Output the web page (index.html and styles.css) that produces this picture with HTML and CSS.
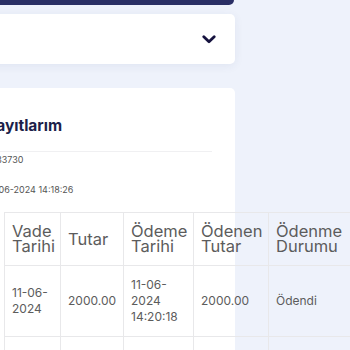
FILE: index.html
```html
<!DOCTYPE html>
<html lang="tr">
<head>
<meta charset="utf-8">
<link rel="stylesheet" href="styles.css">
</head>
<body>
<div class="page">
  <div class="topbar"></div>
  <div class="select-card">
    <svg class="chevron" width="14" height="9" viewBox="0 0 14 9"><path d="M1.8 1.8 L7 6.8 L12.2 1.8" fill="none" stroke="#16133f" stroke-width="2.8" stroke-linecap="round" stroke-linejoin="round"/></svg>
  </div>
  <div class="records-card">
    <h2 class="title">Kayıtlarım</h2>
    <div class="info">
      <div class="info-row">1233730</div>
      <div class="info-row">11-06-2024 14:18:26</div>
    </div>
    <table class="plan">
      <colgroup>
        <col class="c1"><col class="c2"><col class="c3"><col class="c4"><col class="c5">
      </colgroup>
      <thead>
        <tr>
          <th>Vade Tarihi</th>
          <th>Tutar</th>
          <th>Ödeme Tarihi</th>
          <th>Ödenen Tutar</th>
          <th>Ödenme Durumu</th>
        </tr>
      </thead>
      <tbody>
        <tr class="row">
          <td>11-06-<br>2024</td>
          <td>2000.00</td>
          <td>11-06-<br>2024<br>14:20:18</td>
          <td>2000.00</td>
          <td>Ödendi</td>
        </tr>
        <tr class="row">
          <td>11-07-<br>2024</td>
          <td>2000.00</td>
          <td></td>
          <td>0.00</td>
          <td>Bekliyor</td>
        </tr>
      </tbody>
    </table>
  </div>
</div>
</body>
</html>
```

FILE: styles.css
```css
html, body {
  margin: 0;
  padding: 0;
}
body {
  background: #eef2fb;
  font-family: Inter, "Open Sans", sans-serif;
  overflow: hidden;
  height: 350px;
}
.page {
  margin-left: -24px;
  width: 259px;
  display: flex;
  flex-direction: column;
}
.topbar {
  height: 5px;
  background: #2a2f65;
  border-radius: 0 0 5px 5px;
  width: 258px;
}
.select-card {
  margin-top: 9px;
  height: 50px;
  background: #fff;
  border-radius: 5px;
  box-shadow: 0 2px 10px rgba(40, 50, 110, 0.07);
  display: flex;
  align-items: center;
  justify-content: flex-end;
  padding-right: 19px;
}
.chevron {
  display: block;
  margin-top: 1px;
}
.records-card {
  margin-top: 24px;
  background: #fff;
  border-radius: 5px;
  padding: 28px 23px 0 11px;
  height: 400px;
}
.title {
  margin: 0 0 0 -2px;
  font-size: 15.5px;
  line-height: 20px;
  font-weight: 700;
  color: #1d1f4a;
}
.info {
  margin-top: 15px;
  border-top: 1px solid #f0f0f2;
}
.info-row {
  font-size: 9px;
  line-height: 15px;
  color: #555;
  margin-bottom: 15px;
}
.plan {
  margin-left: 17px;
  border-collapse: collapse;
  table-layout: fixed;
  width: 346px;
  color: #5c5c5c;
}
.c1 { width: 56px; }
.c2 { width: 63px; }
.c3 { width: 70px; }
.c4 { width: 75px; }
.c5 { width: 82px; }
.plan th,
.plan td {
  border: 1px solid #e8e8ea;
  text-align: left;
  vertical-align: middle;
  padding: 0 7px;
}
.plan th {
  font-weight: 400;
  font-size: 16.5px;
  line-height: 15px;
  height: 52px;
}
.plan td {
  font-size: 12px;
  line-height: 16px;
  height: 70px;
}
```
